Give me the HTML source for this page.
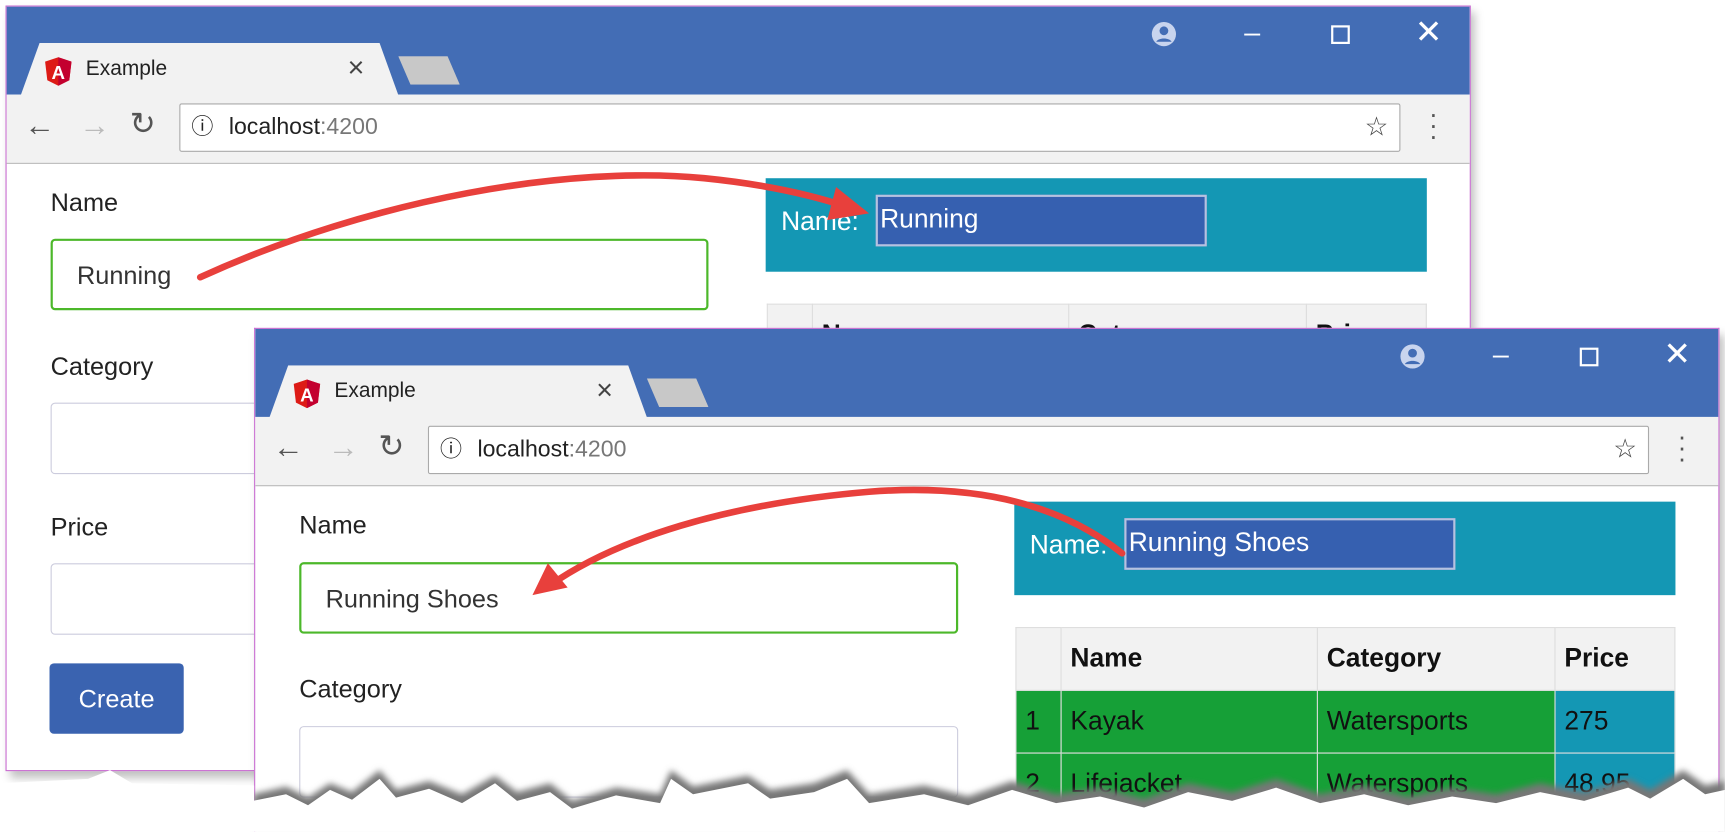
<!DOCTYPE html>
<html><head><meta charset="utf-8"><style>
*{box-sizing:border-box;margin:0;padding:0}
html,body{width:1725px;height:832px;overflow:hidden;background:#fff;font-family:"Liberation Sans",sans-serif}
#s{position:absolute;left:0;top:0;width:1568px;height:756px;overflow:hidden;transform:scale(1.1001);transform-origin:0 0}
.win{position:absolute;width:1332px;height:696px;border:1.5px solid #c86ad0;background:#fff;overflow:hidden;box-shadow:4px 6px 8px rgba(0,0,0,.25)}
.tb{position:absolute;left:0;top:0;right:0;height:80px;background:#436db5}
.tab{position:absolute;left:12px;top:33px;width:345px;height:50px;background:#f2f2f2;clip-path:polygon(0 100%,18px 0,calc(100% - 18px) 0,100% 100%)}
.tab2{position:absolute;left:356px;top:45px;width:56px;height:26px;background:#c8c8c8;clip-path:polygon(0 0,80% 0,100% 100%,20% 100%)}
.tool{position:absolute;left:0;top:80px;right:0;height:63px;background:#f2f2f2;border-bottom:1.5px solid #bbb}
.addr{position:absolute;left:157px;top:8px;width:1110px;height:44px;background:#fff;border:1px solid #aaa;border-radius:2px;font-size:21px;line-height:42px;padding-left:44px;color:#222}
.lbl{position:absolute;font-size:23px;color:#222}
.inp{position:absolute;height:65px;border:1.5px solid #ccd;border-radius:4px;background:#fff;font-size:23px;line-height:62px;padding-left:22px;color:#333}
.g{border:2.5px solid #4cb82a}
.teal{position:absolute;width:601px;height:85px;background:#1497b4;color:#fff;font-size:24px}
.ti{position:absolute;left:100px;top:15px;width:301px;height:47px;background:#3660b0;border:2px solid #b6c2e0;line-height:42px;padding-left:2px}
table{position:absolute;border-collapse:collapse;font-size:24px}
td,th{border:1.5px solid #ddd;text-align:left;padding-left:8px;height:57px}
th{background:#f2f2f2;color:#111}
.gr td{background:#16a037;color:#111}
.gr td.p{background:#1497b4}
.ic{position:absolute;color:#fff;font-size:26px}
</style></head><body><div id="s">
<div class="win" style="left:5px;top:5px">
 <div class="tb"></div><div class="tab"></div><div class="tab2"></div>
 <svg style="position:absolute;left:34px;top:45px" width="26" height="28" viewBox="0 0 26 28"><path d="M13 1 25 5 23 22 13 27 3 22 1 5Z" fill="#dd1b16"/><path d="M13 1 25 5 23 22 13 27Z" fill="#c3002f"/><text x="13" y="21" fill="#fff" font-size="17" font-weight="bold" text-anchor="middle" font-family="Liberation Sans">A</text></svg>
 <div style="position:absolute;left:72px;top:46px;font-size:19px;color:#222">Example</div>
 <div style="position:absolute;left:310px;top:40px;font-size:26px;color:#444">×</div>
 <svg style="position:absolute;left:1040px;top:13px" width="24" height="24" viewBox="0 0 24 24"><circle cx="12" cy="12" r="11" fill="#c8d4ee"/><circle cx="12" cy="9" r="4" fill="#436db5"/><path d="M5 19c2-4 12-4 14 0" fill="#436db5"/></svg>
 <div class="ic" style="left:1125px;top:8px">–</div>
 <div style="position:absolute;left:1204px;top:17px;width:17px;height:17px;border:2px solid #fff"></div>
 <div class="ic" style="left:1280px;top:6px;font-size:30px">✕</div>
 <div class="tool">
  <div style="position:absolute;left:16px;top:12px;font-size:28px;color:#555">←</div>
  <div style="position:absolute;left:66px;top:12px;font-size:28px;color:#bbb">→</div>
  <div style="position:absolute;left:112px;top:10px;font-size:28px;color:#555">↻</div>
  <div class="addr"><span style="position:absolute;left:10px;top:0;font-size:20px">ⓘ</span>localhost<span style="color:#777">:4200</span><span style="position:absolute;right:10px;top:0;font-size:24px;color:#444">☆</span></div>
  <div style="position:absolute;left:1293px;top:14px;font-size:24px;color:#555;line-height:10px">·<br>·<br>·</div>
 </div>
 <div class="lbl" style="left:40px;top:165px">Name</div>
 <div class="inp g" style="left:40px;top:211px;width:598px">Running</div>
 <div class="lbl" style="left:40px;top:314px">Category</div>
 <div class="inp" style="left:40px;top:360px;width:300px"></div>
 <div class="lbl" style="left:40px;top:460px">Price</div>
 <div class="inp" style="left:40px;top:506px;width:300px"></div>
 <div style="position:absolute;left:39px;top:597px;width:122px;height:64px;background:#3a63b0;border-radius:4px;color:#fff;font-size:23px;text-align:center;line-height:64px">Create</div>
 <div class="teal" style="left:690px;top:156px"><span style="position:absolute;left:14px;top:26px">Name:</span><div class="ti">Running</div></div>
 <table style="left:691px;top:270px;width:600px"><tr><th style="width:41px"></th><th style="width:233px">Name</th><th style="width:216px">Category</th><th>Price</th></tr></table>
</div>
<div class="win" style="left:231px;top:298px;height:470px;border-bottom:none">
 <div class="tb"></div><div class="tab"></div><div class="tab2"></div>
 <svg style="position:absolute;left:34px;top:45px" width="26" height="28" viewBox="0 0 26 28"><path d="M13 1 25 5 23 22 13 27 3 22 1 5Z" fill="#dd1b16"/><path d="M13 1 25 5 23 22 13 27Z" fill="#c3002f"/><text x="13" y="21" fill="#fff" font-size="17" font-weight="bold" text-anchor="middle" font-family="Liberation Sans">A</text></svg>
 <div style="position:absolute;left:72px;top:46px;font-size:19px;color:#222">Example</div>
 <div style="position:absolute;left:310px;top:40px;font-size:26px;color:#444">×</div>
 <svg style="position:absolute;left:1040px;top:13px" width="24" height="24" viewBox="0 0 24 24"><circle cx="12" cy="12" r="11" fill="#c8d4ee"/><circle cx="12" cy="9" r="4" fill="#436db5"/><path d="M5 19c2-4 12-4 14 0" fill="#436db5"/></svg>
 <div class="ic" style="left:1125px;top:8px">–</div>
 <div style="position:absolute;left:1204px;top:17px;width:17px;height:17px;border:2px solid #fff"></div>
 <div class="ic" style="left:1280px;top:6px;font-size:30px">✕</div>
 <div class="tool">
  <div style="position:absolute;left:16px;top:12px;font-size:28px;color:#555">←</div>
  <div style="position:absolute;left:66px;top:12px;font-size:28px;color:#bbb">→</div>
  <div style="position:absolute;left:112px;top:10px;font-size:28px;color:#555">↻</div>
  <div class="addr"><span style="position:absolute;left:10px;top:0;font-size:20px">ⓘ</span>localhost<span style="color:#777">:4200</span><span style="position:absolute;right:10px;top:0;font-size:24px;color:#444">☆</span></div>
  <div style="position:absolute;left:1293px;top:14px;font-size:24px;color:#555;line-height:10px">·<br>·<br>·</div>
 </div>
 <div class="lbl" style="left:40px;top:165px">Name</div>
 <div class="inp g" style="left:40px;top:212px;width:599px">Running Shoes</div>
 <div class="lbl" style="left:40px;top:314px">Category</div>
 <div class="inp" style="left:40px;top:361px;width:599px"></div>
 <div class="teal" style="left:690px;top:157px"><span style="position:absolute;left:14px;top:26px">Name:</span><div class="ti">Running Shoes</div></div>
 <table style="left:691px;top:271px;width:600px"><tr><th style="width:41px"></th><th style="width:233px">Name</th><th style="width:216px">Category</th><th>Price</th></tr>
 <tr class="gr"><td>1</td><td>Kayak</td><td>Watersports</td><td class="p">275</td></tr>
 <tr class="gr"><td>2</td><td>Lifejacket</td><td>Watersports</td><td class="p">48.95</td></tr></table>
</div>
<svg style="position:absolute;left:0;top:0" width="1568" height="756">
<defs><filter id="b"><feGaussianBlur stdDeviation="3"/></filter></defs>
<path d="M230 722 L260 715 280 725 300 712 320 720 345 700 360 718 390 710 420 722 450 705 470 720 500 712 520 728 560 716 600 722 610 700 630 715 680 705 700 718 740 712 770 700 790 722 840 714 880 724 920 710 960 722 1000 716 1040 726 1080 712 1120 720 1160 708 1200 722 1240 714 1280 724 1320 716 1360 722 1400 712 1440 720 1480 708 1500 718 1530 700 1550 714 1568 710 1568 756 230 756Z" fill="#777" filter="url(#b)"/>
<path d="M230 728 L260 722 280 732 300 718 320 727 345 708 360 725 390 717 420 730 450 712 470 728 500 720 520 735 560 723 600 730 610 708 630 722 680 712 700 726 740 720 770 708 790 730 840 722 880 732 920 718 960 730 1000 724 1040 734 1080 720 1120 728 1160 716 1200 730 1240 722 1280 732 1320 724 1360 730 1400 720 1440 728 1480 716 1500 726 1530 708 1550 722 1568 718 1568 756 230 756Z" fill="#fff"/>
<path d="M0 712 L80 708 100 700 120 712 231 714 231 756 0 756Z" fill="#fff"/>
<g fill="none" stroke="#e8403c" stroke-width="6" stroke-linecap="round">
<path d="M182 252 C340 180 520 150 640 162 C700 168 740 178 770 188"/>
<path d="M1020 503 C960 455 880 440 790 447 C660 458 560 490 500 532"/>
</g>
<path d="M790 194 L760 170 752 200Z" fill="#e8403c"/>
<path d="M484 541 L498 512 516 534Z" fill="#e8403c"/>
</svg>
</div></body></html>
